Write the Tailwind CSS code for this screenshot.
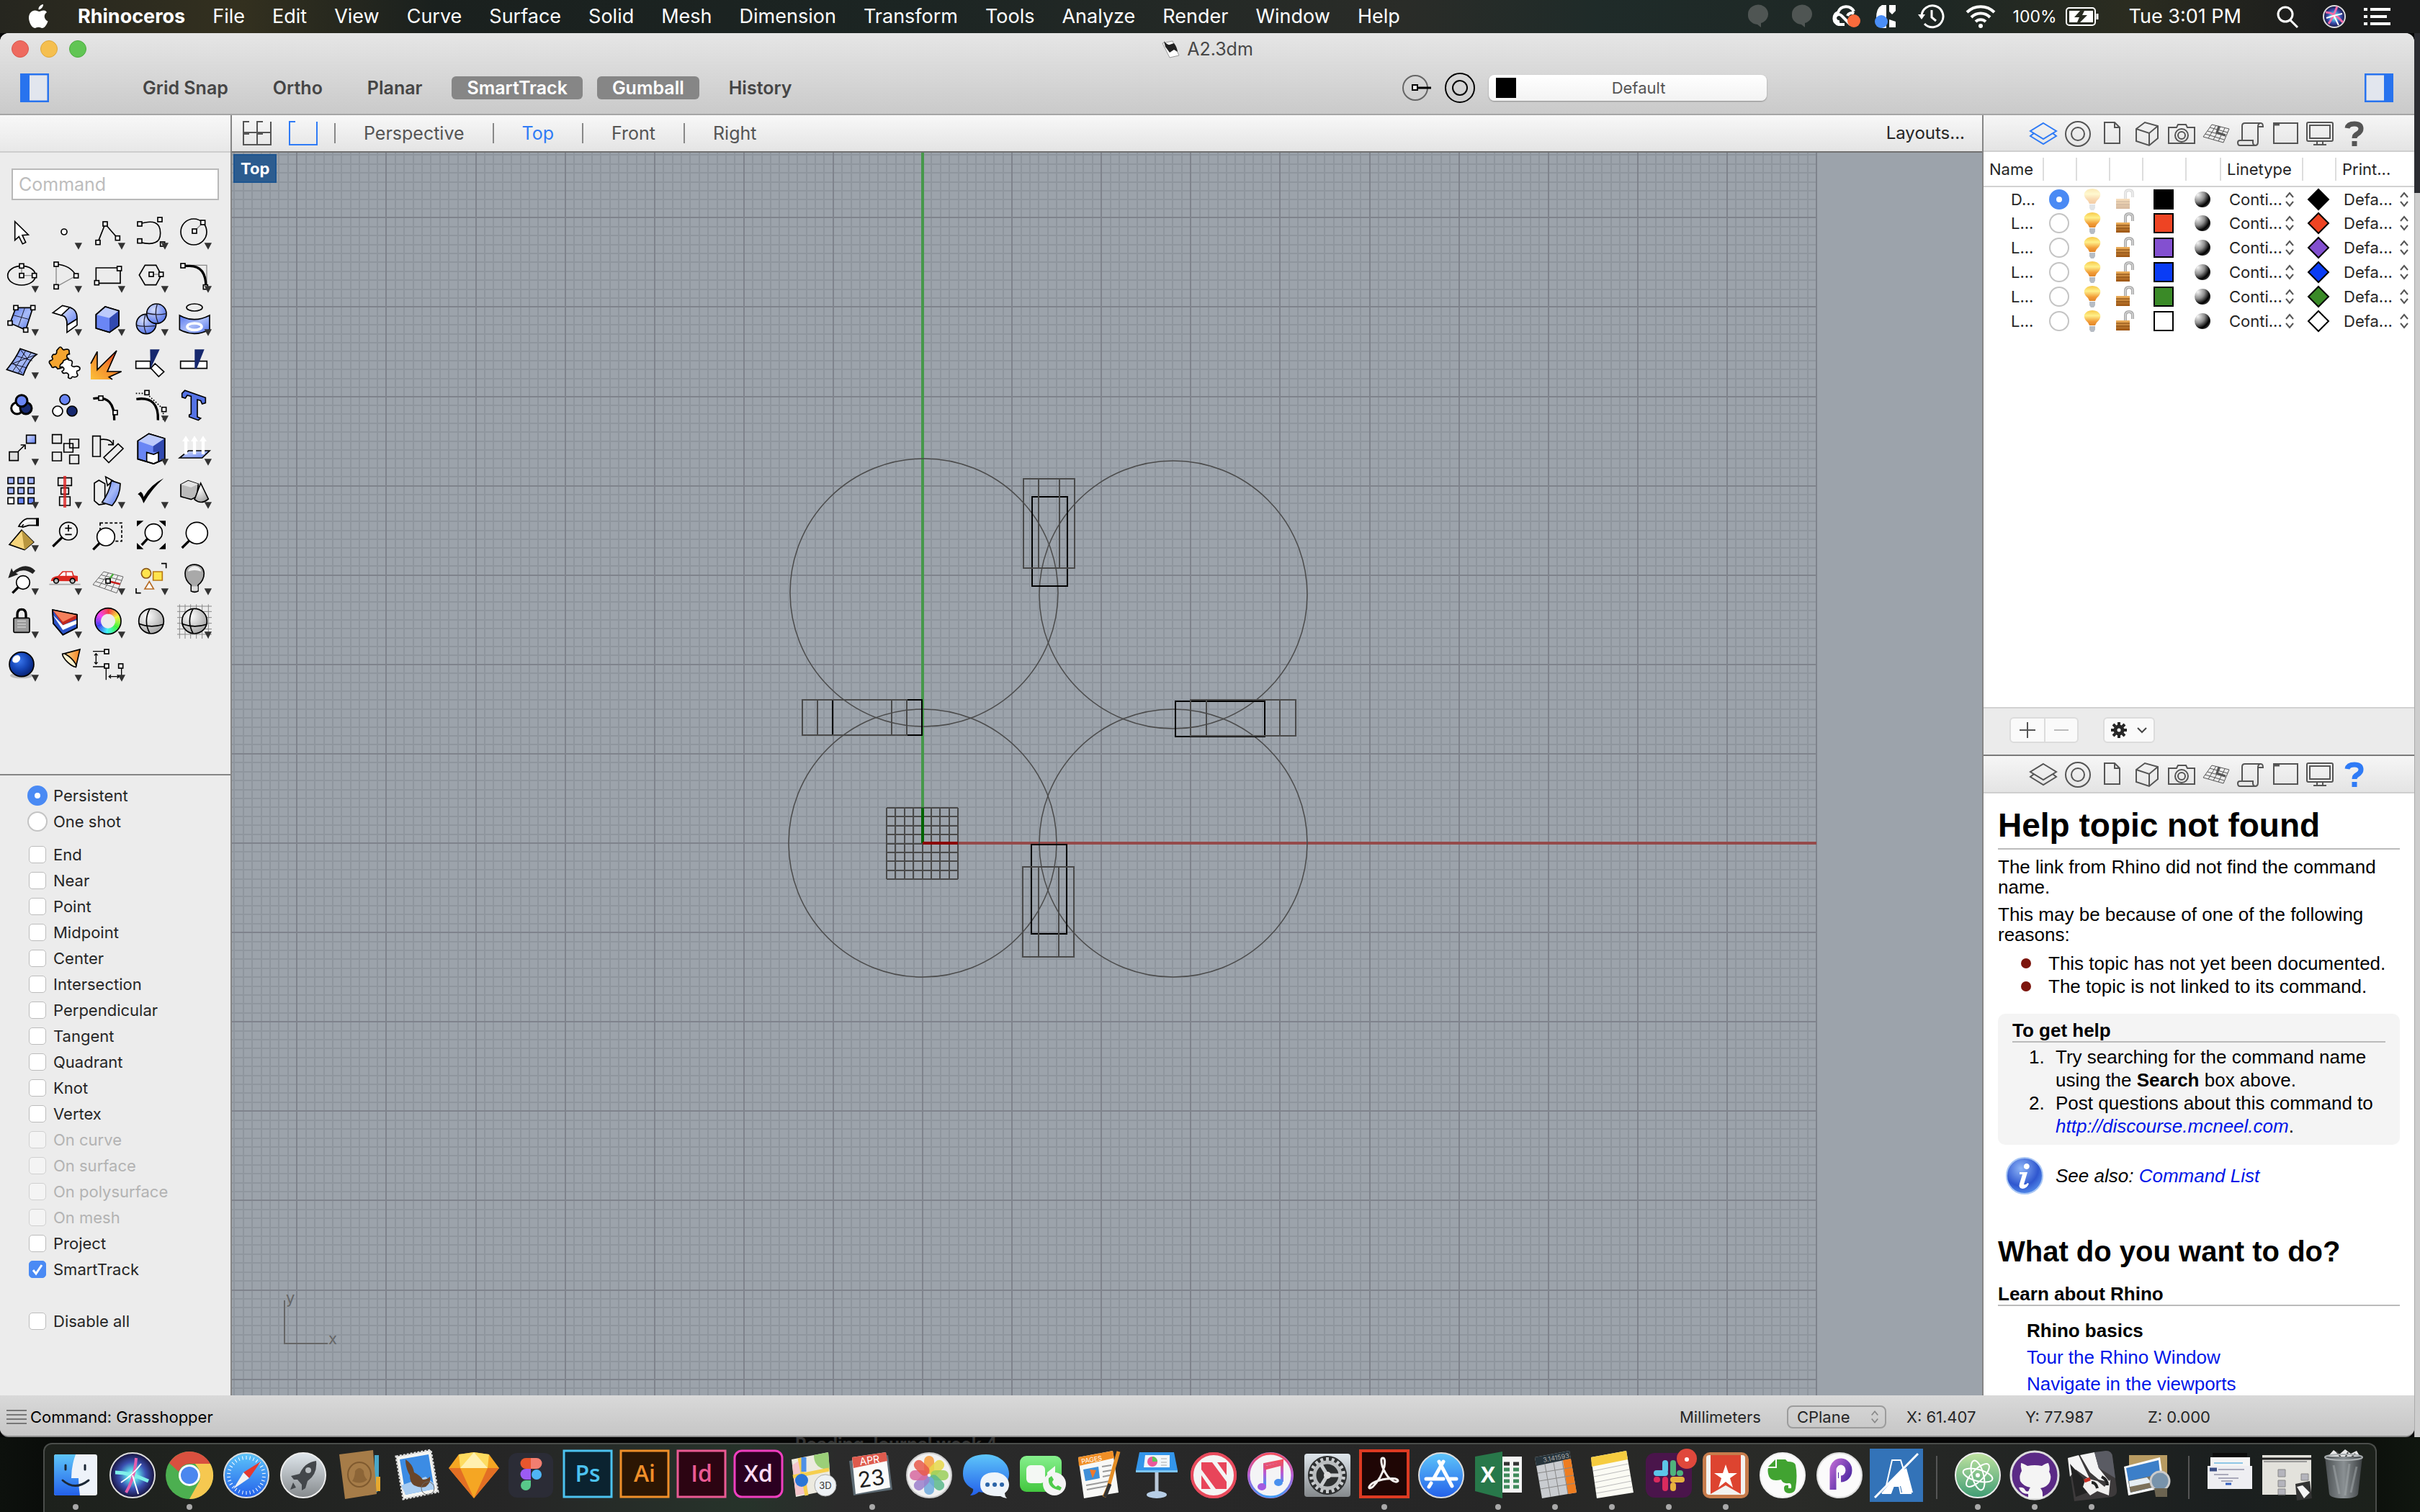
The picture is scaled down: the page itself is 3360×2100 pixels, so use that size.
<!DOCTYPE html>
<html lang="en">
<head>
<meta charset="utf-8">
<title>A2.3dm</title>
<script src="https://cdn.jsdelivr.net/npm/@tailwindcss/browser@4"></script>
</head>
<body class="h-screen overflow-hidden bg-[#060707] font-['Inter',sans-serif] text-[22px] leading-7 text-[#262626] flex flex-col">

<svg class="absolute size-0" aria-hidden="true">
  <defs>
    <linearGradient id="gBlue" x1="0" y1="0" x2="1" y2="1"><stop offset="0" stop-color="#5575ee"/><stop offset=".5" stop-color="#a9bcf8"/><stop offset="1" stop-color="#5070e8"/></linearGradient>
    <linearGradient id="gBlueV" x1="0" y1="0" x2="1" y2="1"><stop offset="0" stop-color="#dfe6ff"/><stop offset="1" stop-color="#5d7cf0"/></linearGradient>
    <radialGradient id="gBall" cx=".35" cy=".3" r=".8"><stop offset="0" stop-color="#d5deff"/><stop offset="1" stop-color="#4a6ce6"/></radialGradient>
    <radialGradient id="gGrey" cx=".35" cy=".3" r=".9"><stop offset="0" stop-color="#fff"/><stop offset="1" stop-color="#8f8f8f"/></radialGradient>
    <radialGradient id="gNavy" cx=".4" cy=".35" r=".75"><stop offset="0" stop-color="#3b78ef"/><stop offset=".5" stop-color="#1444b4"/><stop offset="1" stop-color="#04175e"/></radialGradient>
    <linearGradient id="gFire" x1="0" y1="1" x2="1" y2="0"><stop offset="0" stop-color="#fbc03a"/><stop offset=".5" stop-color="#f58a2c"/><stop offset="1" stop-color="#e02a1c"/></linearGradient>
    <linearGradient id="gGold" x1="0" y1="0" x2="1" y2="0"><stop offset="0" stop-color="#ffe9a6"/><stop offset="1" stop-color="#f4801e"/></linearGradient>
    <linearGradient id="gBulb" x1="0" y1="0" x2="0" y2="1"><stop offset="0" stop-color="#f7c848"/><stop offset=".35" stop-color="#fff08a"/><stop offset=".75" stop-color="#f19a35"/><stop offset="1" stop-color="#e0862a"/></linearGradient>
    <linearGradient id="gLock" x1="0" y1="0" x2="0" y2="1"><stop offset="0" stop-color="#efb25e"/><stop offset="1" stop-color="#9a5210"/></linearGradient>
    <radialGradient id="gMat" cx=".2" cy=".2" r=".95"><stop offset="0" stop-color="#f4f4f4"/><stop offset=".45" stop-color="#8d8d8d"/><stop offset=".8" stop-color="#000"/><stop offset="1" stop-color="#444"/></radialGradient>
    <radialGradient id="gSiri" cx=".5" cy=".5" r=".5"><stop offset="0" stop-color="#fff"/><stop offset=".25" stop-color="#59d6e6"/><stop offset=".6" stop-color="#3a4fb0"/><stop offset="1" stop-color="#17123c"/></radialGradient>
    <linearGradient id="gSky" x1="0" y1="0" x2="0" y2="1"><stop offset="0" stop-color="#5ec6fa"/><stop offset="1" stop-color="#2360ea"/></linearGradient>
    <linearGradient id="gGreen" x1="0" y1="0" x2="0" y2="1"><stop offset="0" stop-color="#86f08d"/><stop offset="1" stop-color="#43c73f"/></linearGradient>
    <linearGradient id="gSilver" x1="0" y1="0" x2="0" y2="1"><stop offset="0" stop-color="#dfe6ec"/><stop offset="1" stop-color="#85898c"/></linearGradient>
    <linearGradient id="gMusic" x1="0" y1="0" x2="0" y2="1"><stop offset="0" stop-color="#f3505e"/><stop offset=".5" stop-color="#b55bd8"/><stop offset="1" stop-color="#3f9df5"/></linearGradient>
    <linearGradient id="gTrash" x1="0" y1="0" x2="1" y2="0"><stop offset="0" stop-color="#4b5052"/><stop offset=".5" stop-color="#8a9093"/><stop offset="1" stop-color="#3b3f41"/></linearGradient>
    <linearGradient id="gAtom" x1="0" y1="0" x2="0" y2="1"><stop offset="0" stop-color="#c0e3a0"/><stop offset="1" stop-color="#3f9c74"/></linearGradient>
    <linearGradient id="gPurple" x1="0" y1="0" x2="1" y2="1"><stop offset="0" stop-color="#b565d0"/><stop offset="1" stop-color="#3d1f9a"/></linearGradient>
    <radialGradient id="gInfo" cx=".4" cy=".3" r=".8"><stop offset="0" stop-color="#8fb6f8"/><stop offset=".6" stop-color="#2f57cf"/><stop offset="1" stop-color="#5f9cf2"/></radialGradient>
    <symbol id="p-layers" viewBox="0 0 48 48"><path d="M24 10 42 21 24 32 6 21ZM11 24 6 28 24 39 42 28 37 24"/></symbol>
    <symbol id="p-ring" viewBox="0 0 48 48"><circle cx="24" cy="25" r="17"/><circle cx="24" cy="25" r="9"/></symbol>
    <symbol id="p-doc" viewBox="0 0 48 48"><path d="M13 9h14l7 7v22H13ZM27 9v7h7"/></symbol>
    <symbol id="p-box" viewBox="0 0 48 48"><path d="M9 18 21 9 39 14 39 31 27 41 9 35ZM9 18 27 24 39 14M27 24V41"/></symbol>
    <symbol id="p-cam" viewBox="0 0 48 48"><path d="M6 16h11l2-4h11l2 4h10v22H6Z"/><circle cx="24" cy="27" r="9"/><circle cx="24" cy="27" r="5"/></symbol>
    <symbol id="p-grid" viewBox="0 0 48 48"><path stroke-width="1" d="M18 12 42 18 34 37 6 29ZM15 16l25 7M12 21l25 7M9 25l26 8M24 13 13 31M30 15 20 33M36 17 27 35"/><path stroke-width="3" d="M28 14 25 23 37 27"/></symbol>
    <symbol id="p-scroll" viewBox="0 0 48 48"><path d="M12 34V14q0-4 4-4h22q3 0 3 5h-7V36q0 5-4 5H9q-3 0-3-4 0-3 3-3h18v3q0 4 4 4M34 15q0-5 4-5"/></symbol>
    <symbol id="p-win" viewBox="0 0 48 48"><path d="M8 10h33v28H8Z"/><path stroke-width="3" d="M9 12h7"/></symbol>
    <symbol id="p-mon" viewBox="0 0 48 48"><path d="M8 9h32q2 0 2 2v22q0 2-2 2H8q-2 0-2-2V11q0-2 2-2ZM10 13h28v18H10ZM20 35v4M28 35v4M15 40h18"/></symbol>
    <symbol id="p-help" viewBox="0 0 48 48"><path stroke-width="7" d="M14 17q1-6 10-6 9 0 9 7 0 4-5 7-4 2-4 6M24 35v7"/></symbol>
    <symbol id="updown" viewBox="0 0 16 28"><path d="M3 11 8 5 13 11M3 17 8 23 13 17" fill="none" stroke="currentColor" stroke-width="2"/></symbol>
  </defs>
</svg>

<header class="h-[46px] shrink-0 flex items-center pl-9 pr-10 text-[27px] text-white bg-[linear-gradient(90deg,#26261f_0%,#33301f_10%,#1a201e_18%,#1c2523_38%,#2a2c28_58%,#1f2b29_66%,#1e2724_80%,#2b2c20_88%,#1b1c1c_96%)]">
  <svg class="size-9 shrink-0" viewBox="0 0 36 36" fill="#fff"><path d="M24 1c.3 4-3.500 7.500-6.500 7.300C17 4.800 20.500 1.500 24 1ZM29 12c-5 3.500-4 10 1.500 12.500C29 29 26 34 22.500 34c-2 0-2.500-1.200-5-1.200S14 34 12.500 34C8 34 4 25 4 20c0-7 4.500-10.500 8.500-10.500 2.500 0 4.500 1.600 6 1.600s3.500-1.800 6.500-1.600c1.500 0 3 .8 4 2.500Z"/></svg>
  <nav class="flex gap-[38px] pl-9">
    <a href="#" class="font-bold">Rhinoceros</a><a href="#">File</a><a href="#">Edit</a><a href="#">View</a><a href="#">Curve</a><a href="#">Surface</a><a href="#">Solid</a><a href="#">Mesh</a><a href="#">Dimension</a><a href="#">Transform</a><a href="#">Tools</a><a href="#">Analyze</a><a href="#">Render</a><a href="#">Window</a><a href="#">Help</a>
  </nav>
  <div class="ml-auto flex items-center">
    <svg class="w-[92px] h-9 mr-6" viewBox="0 0 92 36" fill="#4f5553"><path d="M2 15a14 13 0 1 1 18 12v6l-5-4A14 13 0 0 1 2 15ZM63 15a14 13 0 1 1 18 12v6l-5-4A14 13 0 0 1 63 15Z"/></svg>
    <svg class="w-[44px] h-9 mr-4" viewBox="0 0 44 36" fill="none" stroke="#fff" stroke-width="4"><path d="M20 29H12a9 9 0 0 1-1-17 12 12 0 0 1 22-1M28 29 16 17a5 5 0 1 0-3 8M24 17a6 6 0 0 1 9-3"/><circle cx="33" cy="24" r="9" fill="#f96b3c" stroke="none"/></svg>
    <svg class="w-[36px] h-9 mr-6" viewBox="0 0 36 36"><path d="M18 2h-6Q4 6 4 20q0 10 9 14h5Zm4 0h9v8l-5 5-4-4Zm0 20 9 3v8h-9Z" fill="#fff"/><circle cx="11" cy="25" r="9" fill="#4a8ef7"/></svg>
    <svg class="w-[40px] h-9 mr-7" viewBox="0 0 40 36" fill="none" stroke="#fff" stroke-width="3"><path d="M7 17a15 15 0 1 1 4 11M21 9v10l6 5"/><path d="m2 15 10 0-5 7Z" fill="#fff" stroke="none"/></svg>
    <svg class="w-[42px] h-9 mr-6" viewBox="0 0 42 36" fill="none" stroke="#fff" stroke-width="4"><path d="M2 12a27 27 0 0 1 38 0M8 19a18 18 0 0 1 26 0M14 25a10 10 0 0 1 14 0"/><circle cx="21" cy="31" r="3" fill="#fff" stroke="none"/></svg>
    <span class="text-[23px] mr-3">100%</span>
    <svg class="w-[48px] h-7 mr-10" viewBox="0 0 48 28" fill="none" stroke="#fff" stroke-width="2"><rect x="1" y="2" width="40" height="24" rx="4"/><path d="M44 10v8" stroke-width="3"/><path d="M5 6h15l-8 9h7l-3 7H5ZM38 6H26l-3 6h7l-10 10h18Z" fill="#fff" stroke="none"/></svg>
    <span class="mr-12">Tue 3:01 PM</span>
    <svg class="w-[32px] h-9 mr-8" viewBox="0 0 32 36" fill="none" stroke="#fff" stroke-width="3"><circle cx="13" cy="15" r="10"/><path d="m20 23 10 10"/></svg>
    <svg class="w-[34px] h-9 mr-6" viewBox="0 0 34 36"><circle cx="17" cy="18" r="15" fill="url(#gSiri)" stroke="#ddd" stroke-width="2"/><path d="M5 12q12 0 24 14M9 28q6-8 12-24" stroke="#f06ba8" stroke-width="3" fill="none"/><path d="M6 20q12-4 22-6M17 18l6 12" stroke="#fff" stroke-width="2"/></svg>
    <svg class="w-[38px] h-8" viewBox="0 0 38 32" stroke="#fff" stroke-width="4"><path d="M0 6h5M9 6h28M0 16h5M9 16h23M0 26h5M9 26h28"/></svg>
  </div>
</header>

<div class="flex-1 min-h-0 flex">
<main class="flex-1 min-w-0 flex flex-col rounded-xl overflow-hidden border-b-2 border-[#8f8f8f] bg-[#ececec]">

  <div class="h-[114px] shrink-0 border-b-2 border-[#a5a5a5] bg-linear-to-b from-[#e6e6e6] to-[#cacaca]">
    <div class="h-11 grid grid-cols-[1fr_auto_1fr] items-center px-4">
      <div class="flex gap-4">
        <button aria-label="Close" class="size-6 rounded-full bg-[#ee6a5f] border border-[#d8564c]"></button>
        <button aria-label="Minimize" class="size-6 rounded-full bg-[#f5bf4f] border border-[#dba63d]"></button>
        <button aria-label="Zoom" class="size-6 rounded-full bg-[#61c554] border border-[#4dab40]"></button>
      </div>
      <div class="flex items-center gap-2 text-[25px] text-[#474747]">
        <svg class="size-7" viewBox="0 0 28 28"><path d="M2 6 16 3l9 20-13 3Z" fill="#fff" stroke="#999"/><path d="M4 3q5 6 8 5l6-2q4 5 5 12l-5-3-6 4-6-8Z" fill="#222"/></svg>
        <h1>A2.3dm</h1>
      </div>
      <span></span>
    </div>
    <div class="h-[64px] flex items-center pl-7 pr-[29px]">
      <button aria-label="Toggle left sidebar"><svg class="size-10" viewBox="0 0 40 40"><path d="M1 1h38v38H1Z" fill="#e2e6ee" stroke="#2873ee" stroke-width="3"/><path d="M0 0h13v40H0Z" fill="#2873ee"/></svg></button>
      <div class="flex gap-5 ml-[109px] text-[25px] font-semibold text-[#454545]">
        <button class="h-8 px-[21px] rounded-md">Grid Snap</button>
        <button class="h-8 px-[21px] rounded-md">Ortho</button>
        <button class="h-8 px-[21px] rounded-md">Planar</button>
        <button class="h-8 px-[21px] rounded-md bg-[#868686] text-white">SmartTrack</button>
        <button class="h-8 px-[21px] rounded-md bg-[#868686] text-white">Gumball</button>
        <button class="h-8 px-[21px] rounded-md">History</button>
      </div>
      <div class="ml-auto mr-[830px] flex items-center">
        <svg class="w-[44px] h-11 mr-4" viewBox="0 0 44 44" fill="none"><circle cx="20" cy="22" r="17" stroke="#666" stroke-width="2"/><path d="M22 22h20" stroke="#000" stroke-width="3"/><rect x="16" y="18" width="7" height="7" fill="#fff" stroke="#000" stroke-width="2"/></svg>
        <svg class="size-11 mr-[18px]" viewBox="0 0 44 44" fill="none" stroke="#000" stroke-width="2"><circle cx="22" cy="22" r="20"/><circle cx="22" cy="22" r="10"/></svg>
        <label class="w-[386px] h-9 flex items-center rounded-lg bg-linear-to-b from-white to-[#f3f3f3] shadow-[0_1px_2px_#888] pl-[10px]">
          <span class="size-7 bg-black"></span>
          <select aria-label="Current layer" class="flex-1 h-9 pr-2 appearance-none text-[22px] text-[#555] [text-align-last:center]"><option>Default</option></select>
        </label>
      </div>
      <button aria-label="Toggle right sidebar"><svg class="size-10" viewBox="0 0 40 40"><path d="M1 1h38v38H1Z" fill="#e2e6ee" stroke="#2873ee" stroke-width="3"/><path d="M27 0h13v40H27Z" fill="#2873ee"/></svg></button>
    </div>
  </div>

  <div class="flex-1 min-h-0 flex">
    <aside class="w-[322px] shrink-0 border-r-2 border-[#858585] flex flex-col">
      <div class="h-[52px] shrink-0 border-b-2 border-[#cdcdcd] bg-linear-to-b from-[#f8f8f8] to-[#e8e8e8]"></div>
      <div class="pt-[22px] px-4 pb-[14px]">
        <input type="text" aria-label="Command" placeholder="Command" class="w-full h-11 px-2 bg-white border-2 border-[#b9b9b9] text-[25px] placeholder:text-[#bdbdbd]">
      </div>
      <div id="tools" class="grid grid-cols-[repeat(5,60px)] auto-rows-[60px] pb-[123px] border-b-2 border-[#858585]"></div>
      <form id="osnap" class="flex-1 pt-[10px] pl-[38px] text-[22px]"></form>
    </aside>

    <section class="flex-1 min-w-0 flex flex-col">
      <div class="h-[52px] shrink-0 border-b-2 border-[#717171] bg-linear-to-b from-[#f8f8f8] to-[#e4e4e4] flex items-center pl-[15px] pr-6 text-[25px] text-[#555]">
        <button aria-label="Four viewports" class="mr-6"><svg class="w-10 h-[34px]" viewBox="0 0 40 34" fill="none" stroke="#555" stroke-width="2"><path d="M9 1H1V33H39V1M28 1h-8V33M0 16h40M1 18h8M20 18h8"/></svg></button>
        <button aria-label="Single viewport" class="mr-[23px]"><svg class="w-10 h-[34px]" viewBox="0 0 40 34" fill="none" stroke="#2f7bf6" stroke-width="2"><path d="M9 1H1V33H39V1"/></svg></button>
        <button class="px-[39px] border-l-2 border-[#888]">Perspective</button>
        <button class="px-[39px] border-l-2 border-[#888] text-[#2f7bf6]">Top</button>
        <button class="px-[39px] border-l-2 border-[#888]">Front</button>
        <button class="px-[39px] border-l-2 border-[#888]">Right</button>
        <button class="ml-auto text-[24px] text-[#262626]">Layouts...</button>
      </div>
      <div class="relative flex-1 bg-[#9ca3ab] overflow-hidden">
        <svg id="viewport" class="absolute inset-0 size-full" fill="none"></svg>
        <button class="absolute left-[2px] top-[2px] h-10 px-2 bg-[#2c5c8f] border-2 border-[#1d5590] text-[22px] font-bold text-white">Top</button>
      </div>
    </section>

    <aside class="w-[600px] shrink-0 border-l-2 border-[#858585] flex flex-col bg-white">
      <section class="flex-1 basis-0 min-h-0 flex flex-col border-b-2 border-[#7a7a7a]">
        <div class="panel-tabs h-[51px] shrink-0 flex items-center pl-[59px] border-b-2 border-[#cfcfcf] bg-linear-to-b from-[#f6f6f6] to-[#e4e4e4]" data-active="0"></div>
        <table class="w-full table-fixed text-left text-[22px]">
          <colgroup><col class="w-[82px]"><col class="w-[46px]"><col class="w-[46px]"><col class="w-[46px]"><col class="w-[60px]"><col class="w-[48px]"><col class="w-[114px]"><col class="w-[46px]"><col></colgroup>
          <thead><tr class="h-[48px] border-b-2 border-[#d2d2d2]">
            <th class="font-normal pl-2">Name</th>
            <th><span class="block h-8 border-l-2 border-[#ddd]"></span></th><th><span class="block h-8 border-l-2 border-[#ddd]"></span></th><th><span class="block h-8 border-l-2 border-[#ddd]"></span></th><th><span class="block h-8 border-l-2 border-[#ddd]"></span></th><th><span class="block h-8 border-l-2 border-[#ddd]"></span></th>
            <th class="font-normal"><span class="block h-8 leading-8 border-l-2 border-[#ddd] pl-2">Linetype</span></th><th><span class="block h-8 border-l-2 border-[#ddd]"></span></th>
            <th class="font-normal"><span class="block h-8 leading-8 border-l-2 border-[#ddd] pl-2">Print...</span></th>
          </tr></thead>
          <tbody id="layers"></tbody>
        </table>
        <div class="mt-auto h-[66px] shrink-0 border-t-2 border-[#d2d2d2] bg-[#ebebeb] flex items-center pl-9 pb-1 gap-[34px]">
          <div class="flex rounded-md bg-[#fafafa] border-2 border-[#dcdcdc]">
            <button aria-label="Add layer" class="px-3 border-r-2 border-[#dcdcdc]"><svg class="w-[22px] h-8" viewBox="0 0 22 32" stroke="#555" stroke-width="2"><path d="M0 16h22M11 5v22"/></svg></button>
            <button aria-label="Remove layer" class="px-3"><svg class="w-[20px] h-8" viewBox="0 0 20 32" stroke="#bbb" stroke-width="2"><path d="M0 16h20"/></svg></button>
          </div>
          <button aria-label="Layer actions" class="flex items-center gap-3 px-2 h-9 rounded-md bg-[#fafafa] border-2 border-[#dcdcdc]">
            <svg class="size-6" viewBox="0 0 24 24" fill="none" stroke="#262626"><circle cx="12" cy="12" r="5" stroke-width="5"/><path d="M12 1v4M1 12h4M4 4l3 3M20 4l-3 3M12 23v-4M23 12h-4M20 20l-3-3M4 20l3-3" stroke-width="4"/></svg>
            <svg class="size-4" viewBox="0 0 16 16" fill="none" stroke="#444" stroke-width="2"><path d="m2 5 6 6 6-6"/></svg>
          </button>
        </div>
      </section>
      <section class="flex-1 basis-0 min-h-0 flex flex-col">
        <div class="panel-tabs h-[52px] shrink-0 flex items-center pl-[59px] border-b-2 border-[#cfcfcf] bg-linear-to-b from-[#f6f6f6] to-[#e4e4e4]" data-active="9"></div>
        <article class="flex-1 min-h-0 overflow-hidden px-5 font-['Liberation_Sans',sans-serif] text-[26px] leading-7 text-black">
          <h2 class="mt-5 pb-2 border-b-2 border-[#bbb] text-[46px] leading-[48px] font-bold">Help topic not found</h2>
          <p class="mt-[10px]">The link from Rhino did not find the command name.</p>
          <p class="mt-[10px]">This may be because of one of the following reasons:</p>
          <ul class="mt-[10px] leading-8">
            <li class="flex items-center whitespace-nowrap"><span class="size-[14px] ml-8 mr-6 rounded-full bg-[#7c150d]"></span>This topic has not yet been documented.</li>
            <li class="flex items-center whitespace-nowrap"><span class="size-[14px] ml-8 mr-6 rounded-full bg-[#7c150d]"></span>The topic is not linked to its command.</li>
          </ul>
          <section class="mt-[22px] px-5 pt-2 pb-[10px] rounded-[10px] bg-[#f4f4f4]">
            <h3 class="border-b-2 border-[#bbb] leading-[30px] font-bold">To get help</h3>
            <ol class="mt-1 pl-[52px] list-decimal leading-8">
              <li class="pl-2">Try searching for the command name using the <b>Search</b> box above.</li>
              <li class="pl-2">Post questions about this command to <a href="#" class="italic text-[#0016e8]">http://discourse.mcneel.com</a>.</li>
            </ol>
          </section>
          <p class="mt-4 pl-[10px] h-[54px] flex items-center italic"><svg class="size-[54px] mr-4 shrink-0" viewBox="0 0 54 54"><circle cx="27" cy="27" r="25" fill="url(#gInfo)" stroke="#a8c6f4" stroke-width="2"/><path d="M29 10a4 4 0 1 1-1 7.500 4 4 0 0 1 1-7.500ZM20 22h11l-5 17q3 1 5-2l2 1q-3 7-9 7-6-1-4-7l4-13h-4Z" fill="#fff"/></svg><span>See also: <a href="#" class="text-[#0016e8]">Command List</a></span></p>
          <h2 class="mt-[54px] text-[40px] leading-[48px] font-bold">What do you want to do?</h2>
          <h3 class="mt-5 border-b-2 border-[#bbb] leading-[30px] font-bold">Learn about Rhino</h3>
          <div class="pl-10 pt-4 leading-[37px]">
            <h4 class="font-bold">Rhino basics</h4>
            <a href="#" class="block text-[#0016e8]">Tour the Rhino Window</a>
            <a href="#" class="block text-[#0016e8]">Navigate in the viewports</a>
          </div>
        </article>
      </section>
    </aside>
  </div>

  <footer class="h-14 shrink-0 flex items-center pl-2 pr-[283px] pt-1 bg-linear-to-b from-[#d9d9d9] to-[#c6c6c6] text-[22px]">
    <svg class="w-[30px] h-6 mr-1" viewBox="0 0 30 24" stroke="#777" stroke-width="2"><path d="M1 3h28M1 9h28M1 15h28M1 21h28"/></svg>
    <span class="text-black">Command: Grasshopper</span>
    <span class="ml-auto">Millimeters</span>
    <span class="relative ml-9 mr-7"><select aria-label="Plane" class="w-[138px] h-8 px-3 appearance-none rounded-lg border-2 border-[#9c9c9c]"><option>CPlane</option></select><svg class="absolute right-2 top-1 w-4 h-6 text-[#888] pointer-events-none"><use href="#updown"/></svg></span>
    <span class="w-[165px]">X: 61.407</span><span class="w-[170px]">Y: 77.987</span><span>Z: 0.000</span>
  </footer>
</main>
<div class="w-2 shrink-0 flex flex-col"><span class="h-[222px] bg-[#2b2c31]"></span><span class="flex-1 bg-[#cdcdcd] border-l border-[#aaa]"></span></div>
</div>

<div class="h-[104px] shrink-0 flex flex-col bg-[linear-gradient(90deg,#0d110d,#050505_5%,#050505_94%,#10160f)]">
  <div class="h-2 overflow-hidden pl-[1104px] text-[24px] leading-5 font-bold text-[#333]">Reading Journal week 4</div>
  <nav id="dock" class="flex-1 mx-[60px] pl-[3px] flex items-start rounded-t-xl border-2 border-b-0 border-[#4a4d4a] bg-[linear-gradient(90deg,#1d211c,#262626_20%,#26332a_30%,#2b2b2b_34%,#262626_60%,#2a2b28_75%,#1b1f1f_94%,#1c211b)]"></nav>
</div>

<script>
const svgIcon = (cls, box, body) => `<svg class="${cls}" viewBox="${box}" fill="none">${body}</svg>`;

/* Tool palette: one drawing sheet, three units to a pixel, each button shows its own 180-unit cell */
const sq = (x, y) => `<rect x="${x - 9}" y="${y - 9}" width="18" height="18" fill="#fff" stroke="#000" stroke-width="5"/>`;
const B = 'stroke="#000" stroke-width="5"';
const G = 'stroke="#888" stroke-width="4"';
const mag = (x, y, r, hx, hy, f) => `<path d="M${hx} ${hy} ${x - r * .7} ${y + r * .7}" stroke="#000" stroke-width="10"/><circle cx="${x}" cy="${y}" r="${r}" fill="${f}" ${B}/>`;
const sheetA = [
 ['Select', 0, `<path d="M62 80v78l17-15 15 30 13-6-14-30 25-2Z" fill="#fff" ${B}/>`],
 ['Point', 1, `<circle cx="267" cy="123" r="12" fill="#fff" ${B}/>`],
 ['Polyline', 1, `<path d="M408 166 438 90 490 150" ${B}/>${sq(408,167)+sq(438,90)+sq(490,149)}`],
 ['Curve', 1, `<path d="M582 90q86-28 86 38 0 60-86 38" ${B}/>${sq(582,90)+sq(582,161)+sq(666,72)+sq(677,174)}`],
 ['Circle', 1, `<circle cx="807" cy="123" r="54" ${B}/><path d="M810 120 845 85" ${G}/>${sq(810,120)+sq(845,84)}`],
 ['Ellipse', 1, `<ellipse cx="90" cy="305" rx="58" ry="40" ${B}/><path d="M90 265v40h52" ${G}/>${sq(90,265)+sq(90,305)+sq(143,305)}`],
 ['Arc', 1, `<path d="M234 258V352L317 306" ${G}/><path d="M234 258q60 4 83 48" ${B}/>${sq(234,258)+sq(234,352)+sq(317,306)}`],
 ['Rectangle', 1, `<path d="M400 273H501V337H400Z" ${B}/>${sq(497,276)+sq(403,335)}`],
 ['Polygon', 1, `<path d="M580 303 604 262H650L672 303 650 344H604Z" ${B}/><path d="M630 300h40" ${G}/>${sq(630,300)+sq(671,300)}`],
 ['Fillet curves', 1, `<path d="M765 262h96v88" ${G}/><path d="M765 265h25q68 0 68 88" stroke="#000" stroke-width="10"/>${sq(762,264)+sq(856,353)}`],
 ['Surface from points', 1, `<path d="M66 439H137L107 532 42 503Z" fill="url(#gBlue)" ${B}/><path d="M103 440 76 518M55 470 122 488" stroke="#223" stroke-width="3"/>${sq(66,439)+sq(137,439)+sq(42,503)+sq(107,532)}`],
 ['Surface', 1, `<path d="M220 460 260 430 291 438 256 471Z" fill="#fff" ${B}/><path d="M291 438q32 10 30 48L279 512q2-38-23-41Z" fill="url(#gBlueV)" ${B}/><path d="M321 486v26l-42 30v-30Z" fill="#fff" ${B}/>`],
 ['Box', 1, `<path d="M400 468 438 435 495 452V514L456 542 400 525Z" fill="#6a86f5" ${B}/><path d="M400 468 438 435 495 452 456 482Z" fill="#bccafb"/><path d="M456 482 495 452V514L456 542Z" fill="#3149b0"/><path d="M400 468 438 435 495 452V514L456 542 400 525Z" ${B}/>`],
 ['Boolean union', 1, `<circle cx="609" cy="507" r="41" fill="url(#gBall)" ${B}/><path d="M569 512q20 8 76 3M606 467q-14 40 3 80" stroke="#223" stroke-width="4"/><circle cx="652" cy="464" r="41" fill="url(#gBall)" ${B}/><path d="M612 462q40 10 80 2M655 424q-14 40 4 80" stroke="#223" stroke-width="4"/>`],
 ['Project to surface', 1, `<ellipse cx="810" cy="438" rx="33" ry="15" ${B}/><path d="M748 471q60 34 125 0V530q-65 34-125 0Z" fill="url(#gBlue)" ${B}/><ellipse cx="810" cy="518" rx="30" ry="14" stroke="#fff" stroke-width="11"/>`],
 ['Mesh', 1, `<path d="M84 610 153 634Q120 655 97 720L28 697Q66 650 84 610Z" fill="url(#gBlue)" ${B}/><path d="M107 618Q86 660 52 705M130 626Q108 660 76 712M68 640 134 660M48 672 112 690M84 612 116 655M54 668 92 712M150 635 52 672" stroke="#112" stroke-width="3"/>`],
 ['Explode or join', 0, `<path d="m236 618 8-10q8-10 14 0 4 8 10 6l10-2q12 0 10 12 0 8 4 8-12 0-14 8 0 10 8 12l-4 12q-4 10-12 6-10-4-14 4-4 8 4 14-10 6-20 6-6-12-14-8-10 6-12-4l-8-12q-4-10 8-12 10-4 2-14 4-14 12-10 10-2 8-16Z" fill="#f5a530" ${B}/><path d="m264 660 16-8q8 8 14 6 10 4 6 14l-2 8q8 8 14 4 12-4 20 4 4 12-10 14-6 4 2 18-4 10-16 8-8-4-10 4-8 4-14-2l2-12q-6-10-16-6-10 2-12-8 10-4 8-12-6-10-16-4-2-12 6-16 6-2 8-12Z" fill="#fff" ${B}/>`],
 ['Explode', 0, `<path d="M378 738V672L405 622V698L486 618 450 705 506 706 456 728 468 738Z" fill="url(#gFire)"/><path d="M378 672 405 622V698L486 618 447 705H506L454 728 468 738" ${B}/>`],
 ['Trim', 0, `<path d="M566 662h60v30h-60Z" fill="#fff" ${B}/><path d="m646 672 37 34-22 20-33-35Z" fill="#fff" ${B}/><path d="M625 613h40l-38 80Z" fill="#16286e"/>`],
 ['Split', 0, `<path d="M752 662H862V692H752Z" fill="#fff" ${B}/><path d="M811 613h40l-32 80h-8Z" fill="#16286e"/>`],
 ['Group', 1, `<g stroke="#000" stroke-width="9"><circle cx="71" cy="858" r="24" fill="#fff"/><circle cx="108" cy="858" r="24" fill="#16286e"/><circle cx="90" cy="827" r="24" fill="#6a86f5"/></g>`],
 ['Ungroup', 0, `<circle cx="270" cy="822" r="21" fill="#6a86f5" ${B}/><circle cx="240" cy="870" r="21" fill="#fff" ${B}/><circle cx="300" cy="870" r="21" fill="#16286e" ${B}/>`],
 ['Edit points', 0, `<path d="M388 818q90-18 88 90" stroke="#000" stroke-width="10"/>${sq(420,816)+sq(480,876)}`],
 ['Control points', 1, `<path d="M568 820q94-14 90 88" stroke="#000" stroke-width="10"/><path d="M566 796h44L680 862v50" stroke="#000" stroke-width="5" stroke-dasharray="5 7"/>${sq(612,793)+sq(683,863)}`],
 ['Text', 0, `<path d="m758 796 12-12 86 30v22l-14 4-6-14-14-4v72l14 6-10 8-38-14V886l8-4V808l-16-4-8 12-14-4Z" fill="#5573e6" ${B}/>`],
 ['Move', 1, `<path d="M39 1040H76V1076H39Z" fill="#ddd" ${B}/><path d="M110 970H148V1004H110Z" fill="url(#gBlueV)" ${B}/><path d="M76 1038 104 1011M86 1011h19v18" ${B}/>`],
 ['Copy', 0, `<path d="M218 968h38v36h-38ZM218 1041h38v36h-38ZM266 1005h38v36h-38ZM290 987h38v36h-38ZM290 1053h38v36h-38Z" ${B}/>`],
 ['Rotate', 0, `<path d="M386 974h32v85h-32Z" ${B}/><path d="m492 1006 21 20-60 59-21-22Z" ${B}/><path d="M420 988q40-4 50 20M450 1010h22V990" ${B}/>`],
 ['Solid edit', 1, `<path d="M574 994 620 964 686 984V1070L640 1089 574 1070Z" fill="#6a86f5" ${B}/><path d="M574 994 620 964 686 984 638 1016Z" fill="#bccafb"/><path d="M638 1016 686 984V1070L660 1080V1040H638Z" fill="#3149b0"/><path d="M611 1042 640 1050 660 1042V1080L640 1089 611 1080Z" fill="#fff" ${B}/><path d="M574 994 620 964 686 984V1070L640 1089 574 1070Z" ${B}/>`],
 ['Extrude', 1, `<path d="M748 1065 785 1035H873L842 1065Z" fill="url(#gBlueV)" ${B}/><path d="M774 1050V990M810 1050V990M846 1050V990" stroke="#fff" stroke-width="13"/><path d="M759 996 774 973 789 996ZM795 996 810 973 825 996ZM831 996 846 973 861 996Z" fill="#fff"/>`],
];
let arr = '';
for (const [j, y] of [97, 139, 181].entries()) for (const [i, x] of [33, 75, 117].entries()) arr += `<rect x="${x}" y="${y}" width="25" height="25" fill="${j == 2 && i == 0 ? '#fff' : j == 2 ? '#6a86f5' : '#a4b5fb'}" ${B}/>`;
let hue = '';
for (let a = 0; a < 360; a += 10) { const r = Math.PI / 180, p = (n, d) => (450 + n * Math.sin(d * r)) + ' ' + (695 - n * Math.cos(d * r)); hue += `<path d="M${p(53,a)}L${p(53,a+11)}L${p(30,a+11)}L${p(30,a)}Z" fill="hsl(${a} 90% 60%)"/>`; }
const sphere = (x) => `<circle cx="${x}" cy="695" r="52" fill="url(#gGrey)" ${B}/><path d="M${x-52} 706q50 20 104 2M${x-6} 644q-28 50 0 102" ${B}/>`;
const sheetB = [
 ['Array', 1, arr],
 ['Align', 1, `<path d="M242 98h56v32h-56ZM254 140h32v26h-32ZM248 177h44v36h-44Z" fill="#eee" ${B}/><path d="M270 90V222" stroke="#d22" stroke-opacity=".8" stroke-width="12"/>`],
 ['Deform', 1, `<path d="M393 120 412 108 437 122V206L412 210 393 194Z" fill="#eee" ${B}/><path d="M440 94 470 110 448 130Z" fill="#fff" ${B}/><path d="M464 110 501 122q0 50-34 92l-42-14q30-40 39-90Z" fill="url(#gBlue)" ${B}/>`],
 ['Check', 1, `<path d="M574 166 586 156q10 6 12 22 30-52 84-78-50 44-84 104-10-30-24-38Z" fill="#000"/>`],
 ['Solids', 1, `<path d="M753 126 784 110 826 124 820 176 796 188 753 176Z" fill="#bbb" ${B}/><path d="M753 126 784 110 826 124 796 138Z" fill="#e4e4e4"/><path d="M836 120 868 186q-30 26-58 2Z" fill="url(#gGrey)" ${B}/>`],
 ['Drag mode', 1, `<path d="M90 316 140 366 102 398 39 376Z" fill="#f6d57c" ${B}/><path d="M90 316 140 366 102 398Z" fill="#b8963f"/><path d="M150 268h-38q-20 6-34 32l12 2 8-10M150 296h-30l-28 8" fill="#fff" ${B}/><path d="M150 265h12v34h-12Z" fill="#000"/>`],
 ['Zoom dynamic', 0, mag(285,320,37,220,384,'#f2f2f2') + `<path d="M285 294v28M271 308h28M271 334h28" ${B}/>`],
 ['Zoom window', 0, `<path d="M417 286H507V362H417Z" stroke="#000" stroke-width="5" stroke-dasharray="12 8"/>` + mag(441,344,37,388,397,'#fff')],
 ['Zoom extents', 0, `<path d="M570 277h28l-28 24ZM690 277h-28l28 24ZM570 395h28l-28-26ZM690 395h-28l28-26Z" fill="#000"/>` + mag(640,326,36,590,378,'#fff')],
 ['Zoom selected', 0, mag(820,328,45,758,390,'#fff')],
 ['Undo view', 1, mag(96,534,28,52,578,'#fff') + `<path d="M147 485q-40-40-92 4L48 474 34 516 76 500 66 494q34-22 70 4Z" fill="#222"/>`],
 ['Right view', 1, `<path d="M205 542h130" stroke="#aaa" stroke-width="5"/><path d="M212 528q0-18 30-22l18-19h42l6 18 16 2v22Z" fill="#dc2a22"/><path d="M248 506 263 491h10v15ZM277 491h22l4 15h-26Z" fill="#fff"/><circle cx="234" cy="527" r="10" fill="#bbb" ${B}/><circle cx="302" cy="527" r="10" fill="#bbb" ${B}/>`],
 ['Construction plane', 1, `<path d="M432 489 513 510 486 578 387 543ZM420 502l88 24M410 515l90 25M398 530l96 30M452 494 412 552M472 499 436 560M492 504 462 569" stroke="#666" stroke-width="3"/><path d="M450 528 472 498" stroke="#4caf3f" stroke-width="7"/><path d="M450 528 500 541" stroke="#c8201c" stroke-width="8"/>${sq(450,528)}`],
 ['Select objects', 1, `<circle cx="609" cy="496" r="20" fill="#ffe44d" stroke="#8d5a1c" stroke-width="5"/><path d="M638 489h38v36h-38Z" fill="#ffe44d" stroke="#b97a12" stroke-width="5"/><path d="M622 530 640 561H603Z" fill="#fff" stroke="#b56a22" stroke-width="5"/><path d="M672 455h20v20M567 558v20h20" ${B}/>`],
 ['Hide', 1, `<path d="M796 570V545q-26-20-25-50 2-34 39-36 37 2 40 36 0 30-25 50v25q-14 8-29 0Z" fill="#a9a9a9" ${B}/><path d="M783 488q4-20 27-22 24 2 28 22-28-10-55 0Z" fill="#eee"/><path d="M798 550h26v18h-26Z" fill="#ddd"/>`],
 ['Lock', 1, `<path d="M72 682V668q0-22 18-22 18 0 18 22v14" stroke="#000" stroke-width="10"/><rect x="57" y="682" width="66" height="60" rx="4" fill="#9a9a9a" ${B}/><path d="M72 695h36M72 708h36M72 720h36" stroke="#ccc" stroke-width="5"/>`],
 ['Layers', 1, `<path d="M219 648 321 668V722L262 752 222 705Z" fill="#2b53c8" ${B}/><path d="M219 668 262 732 321 706V690L262 712Z" fill="#fff"/><path d="M219 648 321 668V684L262 712Z" fill="#c3281d"/><path d="M219 648 321 668 262 698Z" fill="#f5805c"/><path d="M219 648 321 668V722L262 752 222 705Z" ${B}/>`],
 ['Properties', 1, hue + `<circle cx="450" cy="695" r="54" ${B}/>`],
 ['Shade', 0, sphere(630)],
 ['Shade options', 1, `<path d="M738 633H882M738 655H882M738 680H882M738 704H882M738 728H882M738 750H882M748 625V768M771 625V768M794 625V768M818 625V768M842 625V768M868 625V768" stroke="#888" stroke-width="3"/>` + sphere(810)],
 ['Render', 1, `<ellipse cx="90" cy="922" rx="48" ry="12" fill="#bbb"/><circle cx="90" cy="875" r="51" fill="url(#gNavy)" ${B}/><ellipse cx="68" cy="853" rx="18" ry="14" transform="rotate(-40 68 853)" fill="#fff"/>`],
 ['Spotlight', 1, `<path d="M261 832 333 813 316 886Z" fill="url(#gGold)" ${B}/><ellipse cx="289" cy="858" rx="38" ry="11" transform="rotate(44 289 858)" fill="#fff3cf" ${B}/>`],
 ['Dimension', 1, `<path d="M387 821h50M387 885h50M400 830v44M393 838l7-8 7 8M393 866l7 8 7-8M442 885v55M506 885v55M454 926h42M462 919l-8 7 8 7M488 919l8 7-8 7" stroke="#000" stroke-width="4"/>${sq(444,822)+sq(444,882)+sq(503,882)}`],
];
const paint = (sheet, top) => sheet.map(([name, menu, art], n) => {
  const x = n % 5 * 180, y = top + Math.floor(n / 5) * 180;
  return `<button aria-label="${name}">${svgIcon('size-[60px]', `${x} ${y} 180 180`, art + (menu ? `<path d="M${x+131} ${y+136}h31l-15 28Z" fill="#333"/>` : ''))}</button>`;
}).join('');
document.getElementById('tools').innerHTML = paint(sheetA, 33) + paint(sheetB, 63);

/* Object snaps */
const check = (t, off, on) => `<label class="h-9 flex items-center ${off ? 'text-[#b3b3b3]' : ''}"><span class="relative size-6 ml-[2px] mr-[10px]"><input type="checkbox" ${off ? 'disabled' : ''} ${on ? 'checked' : ''} class="block size-6 appearance-none rounded-[5px] border border-[#bcbcbc] bg-white disabled:bg-[#f4f4f4] disabled:border-[#d0d0d0] checked:bg-[#4a8af4] checked:border-[#4a8af4]">${on ? '<svg class="absolute inset-0 size-6 pointer-events-none" viewBox="0 0 24 24" fill="none" stroke="#fff" stroke-width="3"><path d="m6 13 4 5 8-12"/></svg>' : ''}</span>${t}</label>`;
const radio = (t, on) => `<label class="h-9 flex items-center"><input type="radio" name="mode" ${on ? 'checked' : ''} class="size-7 mr-2 appearance-none rounded-full border-2 border-[#c4c4c4] bg-white checked:border-[10px] checked:border-[#4a8af4]">${t}</label>`;
document.getElementById('osnap').innerHTML = radio('Persistent', 1) + radio('One shot', 0) + '<div class="h-[10px]"></div>' +
  ['End','Near','Point','Midpoint','Center','Intersection','Perpendicular','Tangent','Quadrant','Knot','Vertex'].map(t => check(t)).join('') +
  ['On curve','On surface','On polysurface','On mesh'].map(t => check(t, 1)).join('') + check('Project') + check('SmartTrack', 0, 1) + '<div class="h-9"></div>' + check('Disable all');

/* Panel tabs */
document.querySelectorAll('.panel-tabs').forEach(bar => {
  bar.innerHTML = [['layers','Layers'],['ring','Osnap'],['doc','Notes'],['box','Blocks'],['cam','Views'],['grid','Planes'],['scroll','Script'],['win','Layouts'],['mon','Display'],['help','Help']].map(([id, name], i) =>
    `<button aria-label="${name}" class="${i == bar.dataset.active ? 'text-[#2f7bf6]' : 'text-[#555]'}"><svg class="size-12" fill="none" stroke="currentColor" stroke-width="2"><use href="#p-${id}"/></svg></button>`).join('');
});

/* Layer table */
const pick = t => `<span class="flex items-center"><select aria-label="${t}" class="w-[76px] h-8 appearance-none"><option>${t}</option></select><svg class="w-4 h-7 text-[#555]"><use href="#updown"/></svg></span>`;
document.getElementById('layers').innerHTML = [['D...','#000'],['L...','#ee4423'],['L...','#8350d0'],['L...','#0a3cf5'],['L...','#3a8a27'],['L...','#fff']].map(([n, c], i) => {
  const dim = i ? '' : 'opacity-40';
  return `<tr class="h-[34px]"><td class="pl-[38px]">${n}</td>
  <td><input type="radio" name="current" aria-label="Current layer" ${i ? '' : 'checked'} class="block mx-auto size-7 appearance-none rounded-full border-2 border-[#c4c4c4] bg-white checked:border-[10px] checked:border-[#4a8af4]"></td>
  <td><svg class="block mx-auto w-6 h-[30px] ${dim}" viewBox="0 0 24 30"><path d="M8 21Q7 17 3 14 0 10 1 6 4 0 12 0t11 6q1 4-2 8-4 3-5 7Z" fill="url(#gBulb)"/><path d="M8 22h8v5l-2 3h-4l-2-3Z" fill="#b6bcc4"/></svg></td>
  <td><svg class="block mx-auto w-7 h-[30px] ${dim}" viewBox="0 0 28 30"><path d="M14 15V7q0-5 5-5t5 5v5" fill="none" stroke="#aaa" stroke-width="4"/><path d="M14 15V7q0-5 5-5t5 5v5" fill="none" stroke="#eee"/><path d="M1 14h19v14H1Z" fill="url(#gLock)"/><path d="M1 18h19M1 22h19" stroke="#7d430c"/></svg></td>
  <td><span class="block ml-4 size-7 border-2 border-black" style="background:${c}"></span></td>
  <td><svg class="block mx-auto size-6" viewBox="0 0 24 24"><circle cx="12" cy="12" r="11" fill="url(#gMat)"/></svg></td>
  <td class="pl-[13px]">${pick('Conti...')}</td>
  <td><svg class="block mx-auto w-8 h-8" viewBox="0 0 32 32"><path d="M16 2 30 16 16 30 2 16Z" fill="${c}" stroke="#000" stroke-width="2"/></svg></td>
  <td class="pl-3">${pick('Defa...')}</td></tr>`;
}).join('');

/* Viewport: origin of the construction plane at (959, 959) */
let minor = '', major = '', cells = '';
for (let i = -100; i <= 100; i++) {
  const p = Math.round(i * 12.41), d = `M${p} -1241V1241M-1241 ${p}H1241`;
  if (i % 10) minor += d; else major += d;
}
for (let i = 0; i <= 8; i++) { const p = Math.round(-50 + i * 12.4); cells += `M${p} -49V50M-50 ${p + 1}H49`; }
document.getElementById('viewport').innerHTML = `
<g transform="translate(959 959)">
  <g stroke-width="2"><path d="${minor}" stroke="#8f969e"/><path d="${major}" stroke="#7f838c"/></g>
  <path d="M0 0V-1241" stroke="#46984a" stroke-width="4"/><path d="M0 0H1241" stroke="#954a4a" stroke-width="4"/>
  <path d="${cells}" stroke="#4a4a4a" stroke-width="2"/>
  <path d="M0 0V-49" stroke="#006400" stroke-width="4"/><path d="M0 0H49" stroke="#8b0000" stroke-width="4"/>
  <g stroke="#4a4a4a" stroke-width="1.500"><circle cx="2" cy="-348" r="186"/><circle cx="348" cy="-345" r="186"/><circle cx="0" cy="0" r="186"/><circle cx="348" cy="0" r="186"/></g>
  <g stroke="#000" stroke-width="2"><path d="M152-481H201V-357H152ZM151 2H200V126H151ZM351-197H475V-148H351ZM-125-199V-150M-22-199H-1V-150H-22"/></g>
  <path d="M140-506H211V-382H140ZM161-506V-382M190-506V-382M139 33H210V158H139ZM161 33V158M189 33V158M-22-199H-167V-150H-22ZM-146-199V-150M-43-199V-150M372-199H518V-149H372ZM394-199V-149M496-199V-149" stroke="#4a4a4a" stroke-width="2"/>
</g>
<path d="M73 1594v60h60" stroke="#666" stroke-width="2"/>
<text x="75" y="1598" font-size="22" fill="#666">y</text><text x="134" y="1655" font-size="22" fill="#666">x</text>`;

/* Dock */
const tile = (bg, bd, fg, t, rx) => `<rect x="3" y="4" width="66" height="64" rx="${rx}" fill="${bg}" stroke="${bd}" stroke-width="3"/><text x="36" y="47" text-anchor="middle" font-family="Open Sans" font-size="32" font-weight="600" fill="${fg}">${t}</text>`;
const disc = (f, s) => `<circle cx="36" cy="38" r="31" fill="${f}" stroke="${s}" stroke-width="2"/>`;
let ticks = ''; for (let a = 0; a < 360; a += 12) ticks += `<path d="M36 11v5" transform="rotate(${a} 36 38)" stroke="#fff" stroke-width="1"/>`;
let petals = ''; ['#f79a38','#e8d84a','#9bcf5a','#5cb98b','#6ea9dc','#9b7fcb','#d76aa0','#e85a4b'].forEach((c, i) => petals += `<rect x="29" y="11" width="14" height="25" rx="7" fill="${c}" fill-opacity=".85" transform="rotate(${i*45} 36 38)"/>`);
let cog = ''; for (let a = 0; a < 360; a += 20) cog += `<path d="M34 13h4v5h-4Z" fill="#c9ccce" transform="rotate(${a} 36 38)"/>`;
const dock = [
 ['Finder', 1, `<rect x="6" y="9" width="60" height="57" rx="3" fill="#eef3fa"/><path d="M9 9h27q-6 16-6 33h10q0 12 2 24H9q-3 0-3-3V12q0-3 3-3Z" fill="url(#gSky)"/><path d="M22 24v6M49 24v6M18 45q17 15 36 0" stroke="#1b2836" stroke-width="3" stroke-linecap="round"/>`],
 ['Siri', 0, disc('url(#gSiri)', '#ddd') + `<path d="M12 34q20 0 46 12" stroke="#7ff0ea" stroke-width="5"/><path d="M27 62q12-20 14-48" stroke="#e65fae" stroke-width="4"/><path d="M20 48q16-10 28-26M36 38l8 26" stroke="#fff" stroke-width="2"/>`],
 ['Chrome', 1, `<circle cx="36" cy="38" r="33" fill="#4caf50"/><path d="M36 5a33 33 0 0 1 29 17H36a16 16 0 0 0-15 11L8 21A33 33 0 0 1 36 5Z" fill="#d9503f"/><path d="M65 22a33 33 0 0 1-29 49l14-25q4-12-6-24Z" fill="#f6c850"/><circle cx="36" cy="38" r="15" fill="#fff"/><circle cx="36" cy="38" r="12" fill="#4b87ef"/>`],
 ['Safari', 0, disc('url(#gSky)', '#ddd') + ticks + `<path d="m56 19-16 23-8-8Z" fill="#e5382e"/><path d="m18 57 14-23 8 8Z" fill="#f2f2f2"/>`],
 ['Launchpad', 0, disc('url(#gSilver)', '#eee') + `<path d="M54 18q-16 2-23 18l-12 3 4 5 5 0 6 7 0 8 5-3 3-10q14-10 12-28ZM22 48l-4 10 8-3Z" fill="#43474b"/><circle cx="43" cy="31" r="4" fill="#b9bec2"/>`],
 ['Contacts', 0, `<path d="M56 10h6v49l-6 5Z" fill="#4aa7c8"/><path d="M58 40h6v20h-6Z" fill="#e7a92f"/><path d="M7 9 54 3 59 64 15 71Z" fill="#a67c48"/><ellipse cx="35" cy="37" rx="16" ry="17" stroke="#7f5a2f" stroke-width="2"/><path d="M25 46q4-6 4-14 6-8 12 0 0 8 5 12-9 8-21 2Z" fill="#8c6537"/>`],
 ['Mail', 0, `<path d="M7 12 55 3 65 61 17 71Z" fill="#f6f6f2" stroke="#ddd" stroke-width="3" stroke-dasharray="3 2"/><path d="M12 16 52 9 60 57 20 65Z" fill="#3c8ce4"/><path d="M14 52 48 40 60 50V57L20 65Z" fill="#a9cdf2"/><path d="M20 16q10 6 12 18 8 4 12 10 6 0 10-4 2 8-6 14-8 2-16-2-6-4-6-14-6-10-6-22Z" fill="#69452a"/><circle cx="51" cy="56" r="9" stroke="#666"/>`],
 ['Sketch', 0, `<path d="M15 9 36 6 57 9 71 28 36 70 1 28Z" fill="#f5a623"/><path d="M15 9 36 6 57 9 55 28H17Z" fill="#fddc60"/><path d="M36 6 17 28H55Z" fill="#fff0b0"/><path d="M1 28H17L36 70ZM71 28H55L36 70Z" fill="#e36f24"/>`],
 ['Figma', 0, `<rect x="5" y="7" width="62" height="62" rx="12" fill="#2b2c36"/><path d="M29 14h7v15h-7a7 7 0 0 1 0-15Z" fill="#e8562d"/><path d="M36 14h8a7 7 0 0 1 0 15h-8Z" fill="#f27e70"/><path d="M29 29h7v15h-7a7 7 0 0 1 0-15Z" fill="#9b5bf4"/><circle cx="44" cy="37" r="7" fill="#4fb5f6"/><path d="M29 45h7v7a7 7 0 1 1-7-7Z" fill="#58c98a"/>`],
 ['Photoshop', 0, tile('#0b2330', '#4cc3f0', '#4cc3f0', 'Ps', 0)],
 ['Illustrator', 0, tile('#2c1603', '#f08f29', '#f08f29', 'Ai', 0)],
 ['InDesign', 0, tile('#2c0412', '#ea5a93', '#ea5a93', 'Id', 0)],
 ['XD', 0, tile('#2b0021', '#f03fc0', '#fbdcf4', 'Xd', 10)],
 ['Maps', 0, `<path d="M3 16 54 6 58 58 9 68Z" fill="#eceadf"/><path d="M4 24 20 13 26 63 9 66Z" fill="#f3c5cb"/><path d="M34 10 54 6 56 30Q34 30 34 10Z" fill="#9bcf78"/><path d="M14 14 24 66M5 40 55 30" stroke="#f6cf4d" stroke-width="5"/><path d="M20 13v20" stroke="#4e90e6" stroke-width="7"/><circle cx="17" cy="45" r="9" fill="#2b75d6"/><circle cx="50" cy="52" r="15" fill="#eef2f5" stroke="#aaa"/><text x="50" y="57" text-anchor="middle" font-size="13" fill="#333">3D</text>`],
 ['Calendar', 1, `<path d="M4 18 10 66 64 58 58 10Z" fill="#5d6b74"/><path d="M8 13 55 6 61 55 13 64Z" fill="#fbfbfb"/><path d="M8 13 55 6 57 18 10 28Z" fill="#de5a4d"/><text x="33" y="22" text-anchor="middle" font-size="14" fill="#fff" transform="rotate(-8 33 22)">APR</text><text x="36" y="53" text-anchor="middle" font-size="30" fill="#222" transform="rotate(-8 36 53)">23</text>`],
 ['Photos', 0, disc('#f1f1f1', '#ccc') + petals],
 ['Messages', 0, `<path d="M36 9c18 0 32 12 32 27S54 62 36 62q-6 0-10-1-5 5-12 5 5-5 4-9Q4 50 4 36 4 9 36 9Z" fill="url(#gSky)"/><path d="M48 34c12 0 20 8 20 17q0 7-6 12 0 4 3 7-6-1-9-3-28 1-28-16 0-17 20-17Z" fill="#eef4fa"/><path d="M38 51h.1M48 51h.1M58 51h.1" stroke="#2b64a8" stroke-width="6" stroke-linecap="round"/>`],
 ['FaceTime', 0, `<rect x="4" y="11" width="58" height="50" rx="9" fill="url(#gGreen)"/><rect x="13" y="24" width="26" height="25" rx="6" fill="#f4f8f4"/><path d="m42 34 11-9v24l-11-8Z" fill="#f4f8f4"/><circle cx="52" cy="50" r="16" fill="#f4f4f4"/><path d="M44 42q-2 14 16 17l2-4-5-3-3 2q-5-4-5-7l2-3-3-5Z" fill="#4fcb4c"/>`],
 ['Pages', 0, `<path d="M6 13 54 4 62 62 14 70Z" fill="#f8f8f6"/><path d="M6 13 54 4 56 14 7 25Z" fill="#f08f26"/><path d="M13 30 34 26 36 42 16 46Z" fill="#3f8fd8"/><path d="M22 30 31 31 26 42Z" fill="#f2792b"/><path d="M17 52 50 46M18 58 50 52M39 26 52 24M40 33 52 31M40 40 50 38" stroke="#999" stroke-width="2"/><text x="11" y="22" font-size="9" fill="#fff" transform="rotate(-10 11 22)">PAGES</text><path d="M62 5 48 54 42 68" stroke="#e58f27" stroke-width="5"/><path d="M50 50 43 68" stroke="#333" stroke-width="5"/>`],
 ['Keynote', 0, `<path d="M36 32v30" stroke="#bac8d8" stroke-width="5"/><ellipse cx="36" cy="65" rx="14" ry="5" fill="#b6cde6"/><path d="M12 6H60L65 31H7Z" fill="#3395ea"/><path d="M20 10h34v17H18Z" fill="#f2f6fa"/><path d="M7 31h58v3H7Z" fill="#7cc4f4"/><circle cx="30" cy="19" r="7" fill="#e95a9b"/><path d="M30 19V12a7 7 0 0 1 7 7Z" fill="#5cc75c"/><path d="M42 15h8M42 20h8M42 24h8" stroke="#aaa"/>`],
 ['News', 0, disc('#f4f4f4', '#e84a5c') + `<circle cx="36" cy="38" r="30" stroke="#e84a5c" stroke-width="4"/><path d="M19 20h15l20 27v10H39L19 30ZM41 20h13v18ZM19 38v19h13Z" fill="#e8455a"/>`],
 ['iTunes', 0, disc('#f4f4f6', '#c77bd8') + `<circle cx="36" cy="38" r="30" stroke="url(#gMusic)" stroke-width="3"/><path d="M28 53V23l24-5v29" stroke="url(#gMusic)" stroke-width="4"/><path d="M28 28l24-6" stroke="#e8506c" stroke-width="5"/><ellipse cx="24" cy="54" rx="6" ry="5" fill="#a45be0"/><ellipse cx="47" cy="48" rx="6" ry="5" fill="#4a90ee"/>`],
 ['System Preferences', 0, `<rect x="4" y="8" width="64" height="60" rx="4" fill="url(#gSilver)"/><circle cx="36" cy="38" r="27" fill="#2d2f30"/>${cog}<circle cx="36" cy="38" r="18" stroke="#b9bcbe" stroke-width="5"/><path d="M36 38H54M36 38 27 23M36 38 27 53" stroke="#c9ccce" stroke-width="5"/><circle cx="36" cy="38" r="5" fill="#ddd"/>`],
 ['Acrobat', 1, `<rect x="3" y="4" width="66" height="64" fill="#1f0605" stroke="#dd3a22" stroke-width="4"/><path d="M34 14q4 0 2 12-4 16-16 28-6 4-5 0 4-8 24-11 16-2 16 3-4 4-14-6-10-14-9-24 0-2 2-2Z" stroke="#f4f0ee" stroke-width="3"/>`],
 ['App Store', 0, disc('url(#gSky)', '#ddd') + `<path d="M33 19 51 53M39 19 26 42M22 49 19 54M15 43h24M48 43h9" stroke="#fff" stroke-width="5" stroke-linecap="round"/>`],
 ['Excel', 1, `<path d="M36 12H69V62H36Z" fill="#f4f4f4"/><path d="M44 22h8M57 22h8" stroke="#333" stroke-width="5"/><path d="M44 30h8M57 30h8M44 38h8M57 38h8M44 46h8M57 46h8M44 54h8M57 54h8" stroke="#3f8a5b" stroke-width="5"/><path d="M4 12 42 5V70L4 60Z" fill="#28784a"/><text x="22" y="48" text-anchor="middle" font-family="Open Sans" font-size="30" font-weight="700" fill="#fff">X</text>`],
 ['Calculator', 1, `<path d="M8 13 56 4 66 62 18 70Z" fill="#c9ccd0"/><path d="M8 13 56 4 58 15 10 25Z" fill="#27343b"/><path d="M47 17 58 15 66 62 54 64Z" fill="#ee7d20"/><path d="M12 35 60 27M14 46 62 38M16 57 64 49M22 23 30 68M34 20 42 66M46 18 54 64" stroke="#888" stroke-width="1"/><text x="20" y="20" font-size="9" fill="#aaa" transform="rotate(-10 20 20)">3.141593</text>`],
 ['Notes', 1, `<path d="M7 13 56 4 66 62 15 70Z" fill="#fbfbf4"/><path d="M7 13 56 4 58 16 8 26Z" fill="#f6cc3f"/><path d="M10 32 59 22M11 40 60 30M12 48 62 38M13 56 63 46M14 63 64 54" stroke="#bbb" stroke-width="1"/>`],
 ['Slack', 1, `<rect x="4" y="7" width="64" height="62" rx="12" fill="#4a154b"/><g stroke-width="8" stroke-linecap="round"><path d="M31 21v10M19 35h12" stroke="#5cc5e8"/><path d="M42 21v14M51 35h1" stroke="#4fb27c"/><path d="M42 44h12M42 52v4" stroke="#e6b13f"/><path d="M31 44v12M19 44h1" stroke="#d92b5e"/></g><circle cx="61" cy="15" r="14" fill="#e0483c"/><circle cx="61" cy="16" r="3" fill="#fff"/>`],
 ['Wunderlist', 1, `<rect x="4" y="6" width="64" height="64" rx="10" fill="#c77c4c"/><rect x="9" y="10" width="54" height="55" rx="4" fill="#f2f2f0"/><path d="M15 10h42v54L36 52 15 64Z" fill="#dd4430"/><path d="m36 23 4 12h12l-10 7 4 13-10-8-10 8 4-13-10-7h12Z" fill="#fff"/>`],
 ['Evernote', 0, disc('#fbfbfb', '#eee') + `<path d="M28 16h12l3 3q10 0 11 5 3 14 0 32-1 7-9 7-7 0-7-7 0-5 6-4v4h4q1-8-4-7-8 1-10-5-16 4-18-8-1-6 0-8h12Z" fill="#41a331"/><path d="m16 26 10-10v10Z" fill="#41a331"/>`],
 ['Paw', 0, disc('#fbfbfb', '#ddd') + `<path d="M27 58V30a11 12 0 1 1 11 13" stroke="url(#gPurple)" stroke-width="9"/><path d="M34 38h1" stroke="#4b2aa4" stroke-width="8"/>`],
 ['Archicad', 0, `<rect x="-1" y="1" width="74" height="74" fill="#3373b8"/><path d="M22 52 30 17h12l14 46H42l-2-10h-8l-4 10H16" stroke="#fff" stroke-width="2"/><path d="M50 28 59 62H44l-2-9H32l-3 10H15l26-30Z" fill="#fff"/><path d="M6 69 66 8" stroke="#fff" stroke-width="3"/>`],
 null,
 ['Atom', 1, disc('url(#gAtom)', '#eee') + `<g stroke="#fff" stroke-width="2"><ellipse cx="36" cy="38" rx="8" ry="21" transform="rotate(-15 36 38)"/><ellipse cx="36" cy="38" rx="8" ry="21" transform="rotate(45 36 38)"/><ellipse cx="36" cy="38" rx="8" ry="21" transform="rotate(105 36 38)"/></g><circle cx="36" cy="38" r="3" fill="#fff"/>`],
 ['GitHub', 1, `<circle cx="36" cy="38" r="33" fill="#5b2a86" stroke="#ddd" stroke-width="3"/><path d="M17 21q2 0 9 4 10-2 20 0 6-4 9-4 3 8 1 12 4 6 1 14-3 7-13 9 3 3 3 8v6H27v-6q-10 0-13-9 7-1 9 4 3 3 5 0 0-2 2-4-10-2-14-9-2-8 2-14-2-6-1-11Z" fill="#f4f4f4"/>`],
 ['Rhino', 1, `<path d="M3 14 56 4Q64 4 65 12L71 58Q72 66 64 68L12 74Z" fill="#3d3a3b"/><path d="M3 14 18 10 34 44 14 30 6 40Z" fill="#f4f4f4"/><path d="M6 22 24 42 30 62 14 68Z" fill="#222"/><path d="M20 10 40 6 46 28 62 48 46 44 34 34Z" fill="#f4f4f4"/><path d="M40 6 56 4Q64 4 65 12L69 42 46 28Z" fill="#5a5b63"/><path d="M28 42 44 46 54 54 62 44 60 66 44 60 34 66 24 54Z" fill="#f0efee"/><path d="m26 46 8-3" stroke="#c62c22" stroke-width="5"/><path d="M36 48q6 0 8 8M50 40q8 4 8 12" stroke="#222" stroke-width="4"/>`],
 ['Preview', 0, `<path d="M9 10H62V58H9Z" fill="#b89b62"/><path d="M2 26 52 13 58 55 8 66Z" fill="#fafafa"/><path d="M5 28 50 17 54 52 11 62Z" fill="#3c7fc9"/><path d="M8 46 53 36 54 52 11 62Z" fill="#7d725c"/><path d="M9 46 34 41 40 48 10 54Z" fill="#e6eef4"/><circle cx="52" cy="46" r="13" fill="#7893ab" stroke="#ccc" stroke-width="3"/><path d="M44 56h18v12H46Z" fill="#6c6451"/>`],
 null,
 ['Minimized dialog', 0, `<path d="M12 7h48v10H12Z" fill="#0c0c0c"/><path d="M9 13H64V28H9Z" fill="#f4f4f4"/><path d="M14 21h40" stroke="#8fc7e6" stroke-width="2"/><path d="M5 25H67V57H5Z" fill="#eeeef2"/><path d="M8 30h10" stroke="#3c4f86" stroke-width="5"/><path d="M20 30h36M14 37h20M20 42h28M24 46h16" stroke="#aab" stroke-width="2"/><path d="M30 50h8" stroke="#3560c0" stroke-width="3"/>`],
 ['Minimized Grasshopper', 0, `<path d="M2 10H70V65H2Z" fill="#e3e2dc"/><path d="M2 15H70" stroke="#222" stroke-width="3"/><path d="M4 19h60" stroke="#999" stroke-width="2"/><path d="M24 30h10v10H24ZM24 45h10v9H24ZM24 57h10v8H24ZM56 36h10v9H56Z" fill="#b4b4bc" stroke="#888"/><path d="M48 50 68 46 71 70 50 73Z" fill="#333"/><path d="M50 54 58 52 68 62 60 70Z" fill="#f4f4f4"/>`],
 ['Trash', 0, `<path d="M14 12 22 3 30 9 38 2 46 8 54 4 60 14Z" fill="#e8e8e8"/><path d="M26 5l6 8M42 6l-4 8M52 8l-6 6" stroke="#444" stroke-width="2"/><path d="M10 12H62L56 64q-2 6-20 6t-20-6Z" fill="url(#gTrash)"/><ellipse cx="36" cy="13" rx="26" ry="4" stroke="#a8adaf" stroke-width="2"/><path d="M22 24l8 40M44 22l-6 44M54 26 46 62" stroke="#a5abad" stroke-opacity=".5" stroke-width="3"/>`],
];
document.getElementById('dock').innerHTML = dock.map(d => d ?
  `<a href="#" aria-label="${d[0]}" class="w-[79px] shrink-0 flex flex-col items-center pt-[5px]">${svgIcon('size-[72px] overflow-visible', '0 0 72 72', d[2])}${d[1] ? '<span class="mt-[6px] size-2 rounded-full bg-[#a9a9a9]"></span>' : ''}</a>` :
  '<span class="w-[34px] shrink-0 pt-4"><span class="block mx-auto w-[2px] h-[60px] bg-[#555]"></span></span>').join('');
</script>
</body>
</html>
